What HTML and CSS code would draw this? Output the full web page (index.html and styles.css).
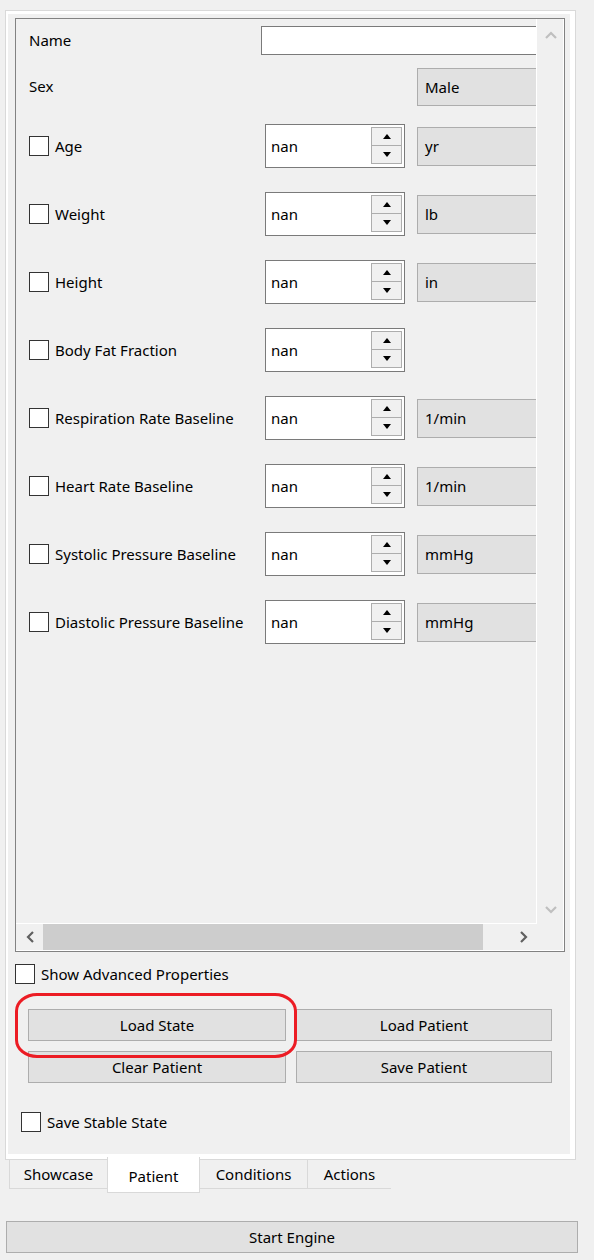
FILE: index.html
```html
<!DOCTYPE html>
<html>
<head>
<meta charset="utf-8">
<link rel="stylesheet" href="styles.css">
</head>
<body>
<div class="pane">
  <div class="page">
    <div class="scroll">
      <div class="viewport">
        <div class="row row-name"><span class="lbl">Name</span><div class="lineedit"></div></div>
        <div class="row row-sex"><span class="lbl">Sex</span><div class="combo">Male</div></div>

        <div class="row prop"><label class="chk"><span class="box"></span>Age</label>
          <div class="spin"><span class="val">nan</span><span class="sbtns"><span class="sb"><svg width="8" height="5" viewBox="0 0 8 5"><polygon points="0,5 4,0 8,5" fill="#000"/></svg></span><span class="sb"><svg width="8" height="5" viewBox="0 0 8 5"><polygon points="0,0 8,0 4,5" fill="#000"/></svg></span></span></div>
          <div class="unit">yr</div></div>

        <div class="row prop"><label class="chk"><span class="box"></span>Weight</label>
          <div class="spin"><span class="val">nan</span><span class="sbtns"><span class="sb"><svg width="8" height="5" viewBox="0 0 8 5"><polygon points="0,5 4,0 8,5" fill="#000"/></svg></span><span class="sb"><svg width="8" height="5" viewBox="0 0 8 5"><polygon points="0,0 8,0 4,5" fill="#000"/></svg></span></span></div>
          <div class="unit">lb</div></div>

        <div class="row prop"><label class="chk"><span class="box"></span>Height</label>
          <div class="spin"><span class="val">nan</span><span class="sbtns"><span class="sb"><svg width="8" height="5" viewBox="0 0 8 5"><polygon points="0,5 4,0 8,5" fill="#000"/></svg></span><span class="sb"><svg width="8" height="5" viewBox="0 0 8 5"><polygon points="0,0 8,0 4,5" fill="#000"/></svg></span></span></div>
          <div class="unit">in</div></div>

        <div class="row prop"><label class="chk"><span class="box"></span>Body Fat Fraction</label>
          <div class="spin"><span class="val">nan</span><span class="sbtns"><span class="sb"><svg width="8" height="5" viewBox="0 0 8 5"><polygon points="0,5 4,0 8,5" fill="#000"/></svg></span><span class="sb"><svg width="8" height="5" viewBox="0 0 8 5"><polygon points="0,0 8,0 4,5" fill="#000"/></svg></span></span></div>
          </div>

        <div class="row prop"><label class="chk"><span class="box"></span>Respiration Rate Baseline</label>
          <div class="spin"><span class="val">nan</span><span class="sbtns"><span class="sb"><svg width="8" height="5" viewBox="0 0 8 5"><polygon points="0,5 4,0 8,5" fill="#000"/></svg></span><span class="sb"><svg width="8" height="5" viewBox="0 0 8 5"><polygon points="0,0 8,0 4,5" fill="#000"/></svg></span></span></div>
          <div class="unit">1/min</div></div>

        <div class="row prop"><label class="chk"><span class="box"></span>Heart Rate Baseline</label>
          <div class="spin"><span class="val">nan</span><span class="sbtns"><span class="sb"><svg width="8" height="5" viewBox="0 0 8 5"><polygon points="0,5 4,0 8,5" fill="#000"/></svg></span><span class="sb"><svg width="8" height="5" viewBox="0 0 8 5"><polygon points="0,0 8,0 4,5" fill="#000"/></svg></span></span></div>
          <div class="unit">1/min</div></div>

        <div class="row prop"><label class="chk"><span class="box"></span>Systolic Pressure Baseline</label>
          <div class="spin"><span class="val">nan</span><span class="sbtns"><span class="sb"><svg width="8" height="5" viewBox="0 0 8 5"><polygon points="0,5 4,0 8,5" fill="#000"/></svg></span><span class="sb"><svg width="8" height="5" viewBox="0 0 8 5"><polygon points="0,0 8,0 4,5" fill="#000"/></svg></span></span></div>
          <div class="unit">mmHg</div></div>

        <div class="row prop"><label class="chk"><span class="box"></span>Diastolic Pressure Baseline</label>
          <div class="spin"><span class="val">nan</span><span class="sbtns"><span class="sb"><svg width="8" height="5" viewBox="0 0 8 5"><polygon points="0,5 4,0 8,5" fill="#000"/></svg></span><span class="sb"><svg width="8" height="5" viewBox="0 0 8 5"><polygon points="0,0 8,0 4,5" fill="#000"/></svg></span></span></div>
          <div class="unit">mmHg</div></div>
      </div>
      <div class="vbar">
        <svg width="12" height="8" viewBox="0 0 12 8"><polyline points="1,7 6,2 11,7" fill="none" stroke="#bfbfbf" stroke-width="2.2"/></svg>
        <svg width="12" height="8" viewBox="0 0 12 8"><polyline points="1,1 6,6 11,1" fill="none" stroke="#bfbfbf" stroke-width="2.2"/></svg>
      </div>
      <div class="hbar">
        <span class="harrow"><svg width="8" height="12" viewBox="0 0 8 12"><polyline points="7,1 2,6 7,11" fill="none" stroke="#606060" stroke-width="2.2"/></svg></span>
        <span class="track"><span class="handle"></span></span>
        <span class="harrow"><svg width="8" height="12" viewBox="0 0 8 12"><polyline points="1,1 6,6 1,11" fill="none" stroke="#606060" stroke-width="2.2"/></svg></span>
      </div>
      <div class="corner"></div>
    </div>

    <label class="chk adv"><span class="box"></span>Show Advanced Properties</label>

    <div class="btns">
      <button class="btn">Load State</button>
      <button class="btn">Load Patient</button>
      <button class="btn">Clear Patient</button>
      <button class="btn">Save Patient</button>
      <div class="highlight"></div>
    </div>

    <label class="chk stable"><span class="box"></span>Save Stable State</label>
  </div>
</div>

<div class="tabs">
  <div class="tab first">Showcase</div>
  <div class="tab sel">Patient</div>
  <div class="tab">Conditions</div>
  <div class="tab last">Actions</div>
</div>

<button class="btn start">Start Engine</button>
</body>
</html>
```

FILE: styles.css
```css
* { box-sizing: border-box; }

body {
  margin: 0;
  background: #f0f0f0;
  font-family: "Noto Sans", "Open Sans", sans-serif;
  font-size: 15px;
  color: #000;
  width: 594px;
  height: 1260px;
  overflow: hidden;
}

.pane {
  margin: 10px 0 0 5px;
  width: 571px;
  height: 1150px;
  border: 1px solid #d9d9d9;
  background: #fff;
  padding: 3px 5px 5px 2px;
}

.page {
  height: 100%;
  background: #f0f0f0;
  padding: 4px 5px 0 7px;
  display: flex;
  flex-direction: column;
}

/* scroll area */
.scroll {
  height: 934px;
  border: 1px solid #828282;
  box-shadow: inset -1px -1px 0 #fff;
  display: grid;
  grid-template-columns: 521px 27px;
  grid-template-rows: 905px 26px;
}

.viewport {
  overflow: hidden;
  border-right: 1px solid #fff;
  border-bottom: 1px solid #fff;
  padding-left: 13px;
}

.row {
  display: flex;
  align-items: center;
  white-space: nowrap;
}

.row > * { flex-shrink: 0; }

.row-name { margin-top: 7px; height: 29px; }
.row-name .lbl { width: 232px; margin-top: -2px; }

.row-sex { margin-top: 13px; height: 38px; }
.row-sex .lbl { width: 388px; margin-top: -2px; }

.prop { height: 68px; }
.row-sex + .prop { margin-top: 6px; }

.lineedit {
  width: 300px;
  height: 29px;
  border: 1px solid #7a7a7a;
  background: #fff;
}

.combo, .unit {
  width: 140px;
  background: #e1e1e1;
  border: 1px solid #adadad;
  display: flex;
  align-items: center;
  padding-left: 7px;
}

.combo { height: 38px; }
.unit { height: 39px; margin-left: 12px; }

.chk {
  display: flex;
  align-items: center;
  gap: 6px;
  white-space: nowrap;
}

.prop .chk { width: 236px; }

.box {
  width: 20px;
  height: 20px;
  border: 1px solid #333;
  background: #fff;
  flex-shrink: 0;
}

.spin {
  width: 140px;
  height: 44px;
  border: 1px solid #7a7a7a;
  background: #fff;
  display: flex;
  align-items: stretch;
  padding: 2px 2px 3px 5px;
}

.spin .val {
  flex: 1;
  display: flex;
  align-items: center;
}

.sbtns {
  width: 31px;
  display: flex;
  flex-direction: column;
}

.sb {
  flex: 1;
  background: #f0f0f0;
  border: 1px solid #adadad;
  display: flex;
  align-items: center;
  justify-content: center;
}

.sb + .sb { border-top: none; }

/* scrollbars */
.vbar {
  display: flex;
  flex-direction: column;
  justify-content: space-between;
  align-items: center;
  padding: 12px 0 10px;
}

.hbar {
  display: flex;
  align-items: stretch;
}

.harrow {
  width: 27px;
  display: flex;
  align-items: center;
  justify-content: center;
}

.track {
  flex: 1;
  display: flex;
}

.handle {
  width: 440px;
  background: #cdcdcd;
}

/* lower controls */
.adv {
  margin-top: 12px;
  height: 20px;
}

.btns {
  position: relative;
  margin: 25px 13px 0 13px;
  display: grid;
  grid-template-columns: 258px 256px;
  column-gap: 10px;
  row-gap: 10px;
}

.btn {
  font-family: inherit;
  font-size: 15px;
  color: #000;
  background: #e1e1e1;
  border: 1px solid #adadad;
  height: 32px;
  padding: 0;
  margin: 0;
}

.highlight {
  position: absolute;
  left: -13px;
  top: -16px;
  width: 282px;
  height: 65px;
  border: 3px solid #ec1c24;
  border-radius: 22px / 18px;
}

.stable {
  margin: 29px 0 0 6px;
  height: 20px;
}

/* tabs */
.tabs {
  display: flex;
  margin-left: 9px;
  align-items: flex-start;
}

.tab {
  height: 29px;
  border-bottom: 1px solid #d9d9d9;
  border-left: 1px solid #d9d9d9;
  display: flex;
  align-items: center;
  justify-content: center;
  background: #f0f0f0;
}

.tab.first { width: 98px; }
.tab.sel {
  width: 93px;
  height: 36px;
  margin-top: -3px;
  background: #fff;
  border: 1px solid #d9d9d9;
  border-top: none;
  padding-top: 2px;
}
.tab.sel + .tab { border-left: none; width: 107px; }
.tab.last { width: 84px; }

.start {
  display: block;
  margin: 28px 0 0 6px;
  width: 572px;
  height: 32px;
}
```
